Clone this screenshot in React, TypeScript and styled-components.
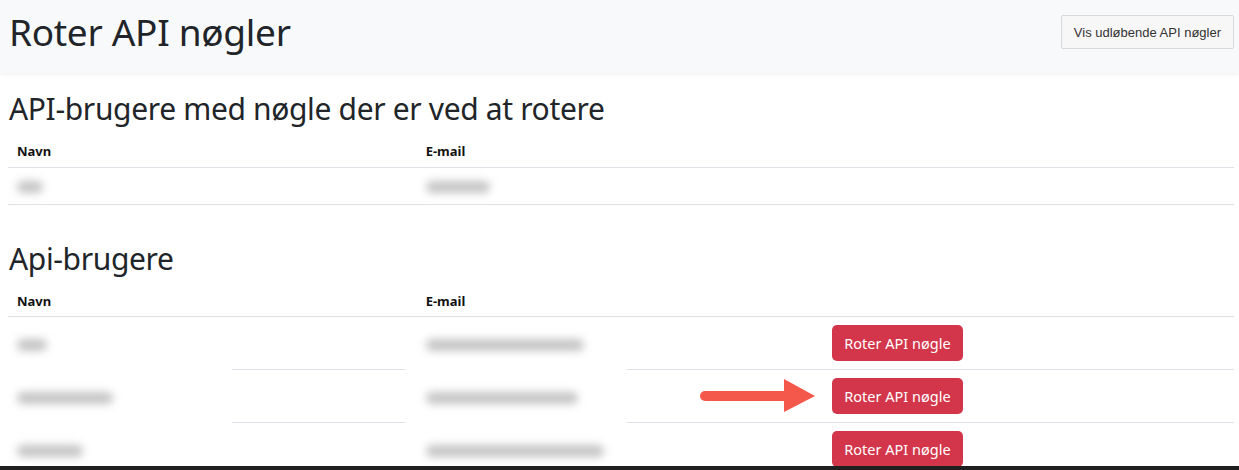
import styled, { createGlobalStyle } from "styled-components";

const GlobalStyle = createGlobalStyle`
  html, body {
    margin: 0;
    padding: 0;
    background: #fff;
  }
  body {
    font-family: "Noto Sans", "Open Sans", sans-serif;
    color: #212529;
  }
`;

const Page = styled.div`
  height: 100vh;
  display: flex;
  flex-direction: column;
  overflow: hidden;
`;

const TopBar = styled.header`
  position: relative;
  z-index: 1;
  flex-shrink: 0;
  height: 73px;
  padding: 0 5px 0 8px;
  display: flex;
  justify-content: space-between;
  align-items: flex-start;
  background: #f8f9fa;
  box-shadow: 0 2px 3px rgba(0, 0, 0, 0.05);
`;

const Title = styled.h1`
  margin: 9px 0 0 1px;
  font-size: 37px;
  font-weight: 400;
  line-height: 46px;
  letter-spacing: -0.3px;
`;

const GhostButton = styled.button`
  margin-top: 15px;
  height: 34px;
  padding: 0 12px;
  font-family: "Liberation Sans", Arial, sans-serif;
  font-size: 13px;
  color: #333;
  background: #f7f7f7;
  border: 1px solid #d9d9d9;
  border-radius: 2px;
`;

const Main = styled.main`
  flex: 1;
  overflow: hidden;
  padding: 0 5px 0 8px;
`;

const SectionTitle = styled.h2<{ $top: number }>`
  margin: ${(p) => p.$top}px 0 0 1px;
  font-size: 30px;
  font-weight: 400;
  line-height: 36px;
  letter-spacing: -0.35px;
`;

const Table = styled.table<{ $gap: number }>`
  width: 100%;
  margin-top: ${(p) => p.$gap}px;
  border-collapse: collapse;
  table-layout: fixed;
`;

const HeadCell = styled.th`
  box-sizing: border-box;
  height: 36px;
  padding: 5px 9px 0;
  text-align: left;
  font-size: 13px;
  font-weight: 700;
  color: #111;
  border-bottom: 1px solid #dee2e6;
`;

const Cell = styled.td<{ $h: number; $maskLeft?: number; $maskWidth?: number }>`
  position: relative;
  height: ${(p) => p.$h}px;
  padding: 0 7px;
  border-bottom: 1px solid #dee2e6;
  vertical-align: middle;
  ${(p) =>
    p.$maskWidth
      ? `
  &::before {
    content: "";
    position: absolute;
    left: ${p.$maskLeft}px;
    width: ${p.$maskWidth}px;
    top: -4px;
    bottom: -2px;
    background: #fff;
  }`
      : ""}
`;

const Blurred = styled.span<{ $w: number }>`
  position: relative;
  display: inline-block;
  width: ${(p) => p.$w}px;
  height: 12px;
  margin-left: 2px;
  border-radius: 6px;
  background: #c4c4c4;
  filter: blur(4px);
  vertical-align: middle;
`;

const DangerButton = styled.button`
  height: 36px;
  padding: 0 12px;
  font-family: "Noto Sans", "Open Sans", sans-serif;
  font-size: 14.5px;
  color: #fff;
  background: #d3364a;
  border: none;
  border-radius: 5px;
`;

const Pointer = styled.svg`
  position: absolute;
  left: -125px;
  top: 50%;
  margin-top: -18px;
`;

const Footer = styled.div`
  flex-shrink: 0;
  height: 4px;
  background: #1f1f1f;
`;

type Person = { name: number; email: number };

const rotating: Person[] = [{ name: 26, email: 64 }];

const users: Person[] = [
  { name: 30, email: 158 },
  { name: 96, email: 152 },
  { name: 66, email: 178 },
];

const Arrow = () => (
  <Pointer width="118" height="36" viewBox="0 0 118 36">
    <line x1="5" y1="18" x2="90" y2="18" stroke="#f4584b" strokeWidth="10" strokeLinecap="round" />
    <polygon points="84,1 115,18 84,34" fill="#f4584b" />
  </Pointer>
);

export default function App() {
  return (
    <Page>
      <GlobalStyle />
      <TopBar>
        <Title>Roter API nøgler</Title>
        <GhostButton>Vis udløbende API nøgler</GhostButton>
      </TopBar>
      <Main>
        <SectionTitle $top={18}>API-brugere med nøgle der er ved at rotere</SectionTitle>
        <Table $gap={4}>
          <thead>
            <tr>
              <HeadCell>Navn</HeadCell>
              <HeadCell>E-mail</HeadCell>
              <HeadCell />
            </tr>
          </thead>
          <tbody>
            {rotating.map((p, i) => (
              <tr key={i}>
                <Cell $h={36}>
                  <Blurred $w={p.name} />
                </Cell>
                <Cell $h={36}>
                  <Blurred $w={p.email} />
                </Cell>
                <Cell $h={36} />
              </tr>
            ))}
          </tbody>
        </Table>
        <SectionTitle $top={36}>Api-brugere</SectionTitle>
        <Table $gap={4}>
          <thead>
            <tr>
              <HeadCell>Navn</HeadCell>
              <HeadCell>E-mail</HeadCell>
              <HeadCell />
            </tr>
          </thead>
          <tbody>
            {users.map((p, i) => (
              <tr key={i}>
                <Cell $h={52} $maskLeft={i > 0 ? 0 : undefined} $maskWidth={i > 0 ? 224 : undefined}>
                  <Blurred $w={p.name} />
                </Cell>
                <Cell $h={52} $maskLeft={i > 0 ? -12 : undefined} $maskWidth={i > 0 ? 222 : undefined}>
                  <Blurred $w={p.email} />
                </Cell>
                <Cell $h={52}>
                  {i === 1 && <Arrow />}
                  <DangerButton>Roter API nøgle</DangerButton>
                </Cell>
              </tr>
            ))}
          </tbody>
        </Table>
      </Main>
      <Footer />
    </Page>
  );
}
